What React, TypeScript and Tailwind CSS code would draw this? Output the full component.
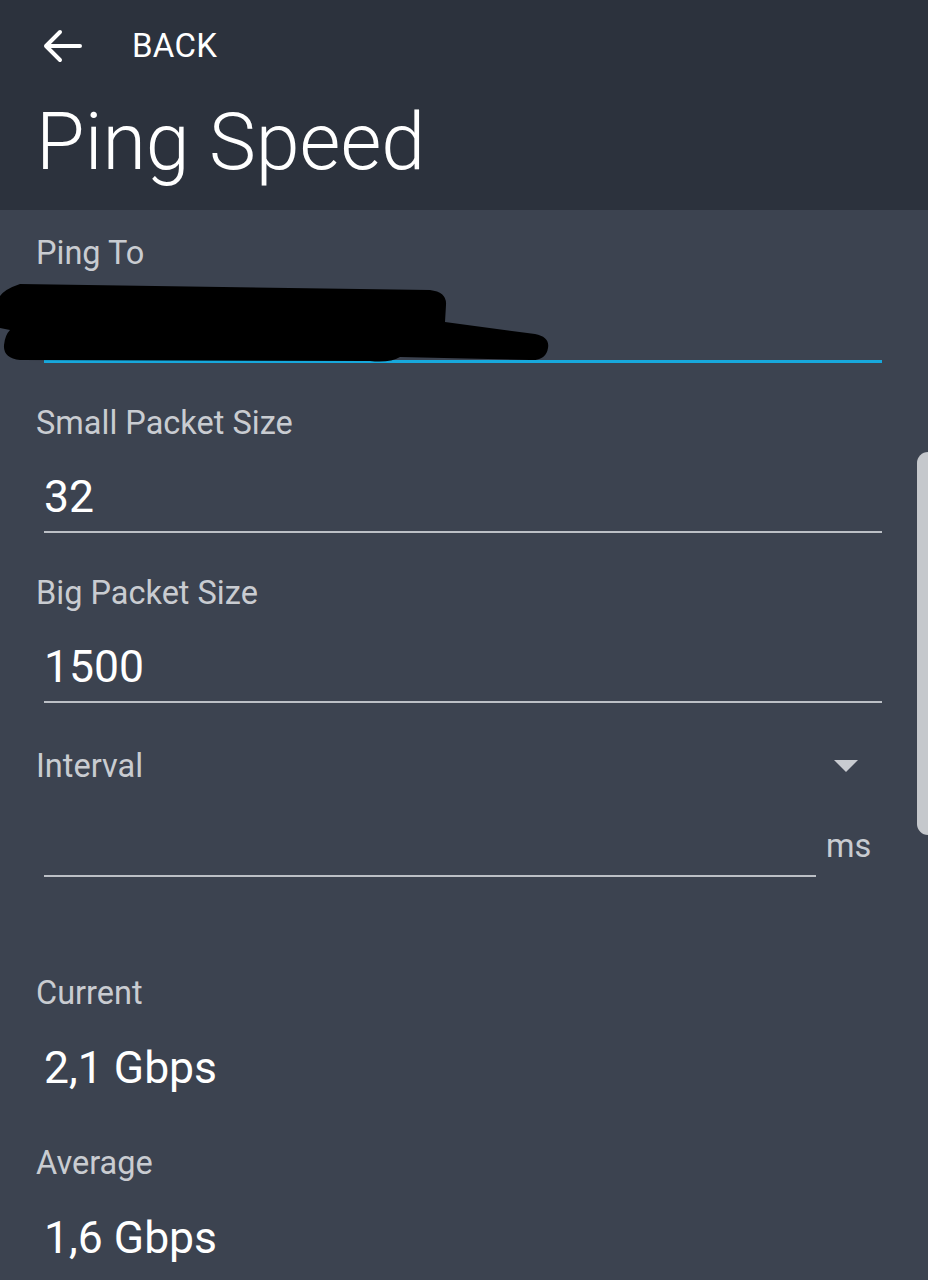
import { FC } from 'react'

const Field: FC<{ label: string; value?: string; active?: boolean }> = ({ label, value, active }) => (
  <div className="h-[170px] pt-[24px]">
    <div className="pl-[36px] text-[32.5px] leading-[38px] text-[#c9ccd1]">{label}</div>
    <div className="ml-[44px] mt-[29px] h-[52px] text-[44.5px] leading-[52px] text-white">{value}</div>
    {active ? (
      <div className="ml-[44px] mt-[7px] h-[3px] w-[838px] bg-[#17a8dc]" />
    ) : (
      <div className="ml-[44px] mt-[8px] h-[2px] w-[838px] bg-[#bcc0c6]" />
    )}
  </div>
)

const Stat: FC<{ label: string; value: string }> = ({ label, value }) => (
  <div className="h-[170px] pt-[24px]">
    <div className="pl-[36px] text-[32.5px] leading-[38px] text-[#c9ccd1]">{label}</div>
    <div className="ml-[44px] mt-[30px] h-[52px] text-[44.5px] leading-[52px] text-white">{value}</div>
  </div>
)

const App: FC = () => {
  return (
    <div className="relative h-[1280px] w-[928px] overflow-hidden bg-[#3c4350] font-['Roboto',sans-serif]">
      <header className="h-[210px] bg-[#2c323d]">
        <div className="flex h-[92px] items-center pl-[42px]">
          <svg width="40" height="36" viewBox="0 0 40 36" fill="none" stroke="white" strokeWidth="4" strokeLinecap="round" strokeLinejoin="round">
            <path d="M38 18H4M18 4L4 18l14 14" />
          </svg>
          <span className="ml-[50px] text-[33px] tracking-[0.3px] text-white">BACK</span>
        </div>
        <h1 className="pl-[36px] text-[79px] font-light leading-[100px] text-white">Ping Speed</h1>
      </header>

      <main>
        <Field label="Ping To" active />
        <Field label="Small Packet Size" value="32" />
        <Field label="Big Packet Size" value="1500" />

        {/* interval dropdown */}
        <div className="h-[170px] pt-[27px]">
          <div className="flex items-center justify-between pr-[70px] pl-[36px]">
            <span className="text-[32.5px] leading-[38px] text-[#c9ccd1]">Interval</span>
            <svg width="24" height="12" viewBox="0 0 24 12">
              <path d="M0 0h24L12 12z" fill="#c9ccd1" />
            </svg>
          </div>
          <div className="ml-[44px] mt-[42px] flex items-end">
            <div className="h-[40px] w-[772px] border-b-2 border-[#bcc0c6]" />
            <span className="ml-[10px] pb-[12px] text-[32.5px] leading-[38px] text-[#c9ccd1]">ms</span>
          </div>
        </div>

        <div className="h-[60px]" />
        <Stat label="Current" value="2,1 Gbps" />
        <Stat label="Average" value="1,6 Gbps" />
      </main>

      {/* redaction scribble over ping target */}
      <svg className="absolute top-0 left-0" width="928" height="400" viewBox="0 0 928 400">
        <path
          d="M20 284 L430 290 Q447 292 446 305 L445 322 L535 334 Q550 337 548 348 Q546 361 530 360 L400 357 Q390 363 370 361 L20 360 Q3 358 4 345 Q5 335 10 330 L0 328 L0 296 Q5 289 20 284 Z"
          fill="black"
        />
      </svg>

      {/* scrollbar */}
      <div className="absolute top-[452px] right-0 h-[383px] w-[11px] rounded-l-full bg-[#c5c8cc]" />
    </div>
  )
}

export default App
